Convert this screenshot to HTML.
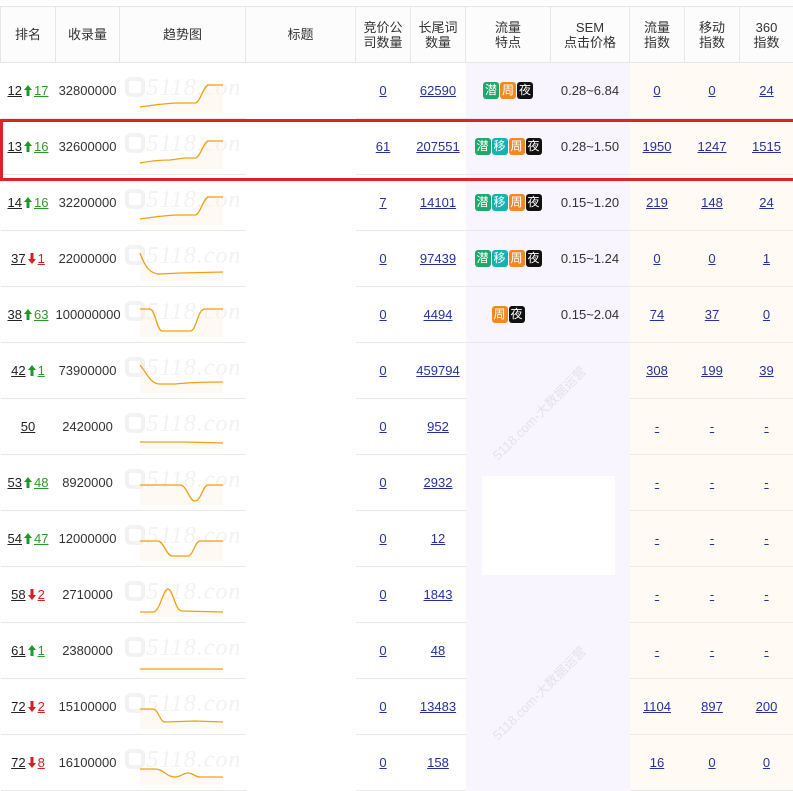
<!DOCTYPE html>
<html><head><meta charset="utf-8"><style>
*{margin:0;padding:0;box-sizing:border-box}
body{width:793px;height:786px;overflow:hidden;background:#fff;font-family:"Liberation Sans","Noto Sans CJK SC",sans-serif;font-size:13px;color:#333;position:relative}
table{position:absolute;left:0;top:6px;border-collapse:collapse;table-layout:fixed;width:793px}
th{height:56px;background:#fcfcfc;font-weight:normal;font-size:13px;color:#333;border:1px solid #e6e6e6;line-height:15px;text-align:center}
td{height:56px;text-align:center;border-bottom:1px solid #e8e8e8;padding:0;position:relative;white-space:nowrap}
td.t{border-bottom:none}
td.p{background:#f8f5fe}
td.o{background:#fffaf3}
td.c{overflow:hidden}
a{color:#22339c;text-decoration:underline}
.r{color:#222;text-decoration:underline}
.g{color:#2a9a2a;text-decoration:underline}
.d{color:#d42020;text-decoration:underline}
.ar{display:inline-block;vertical-align:-1px;margin:0 2px}
.tag{display:inline-block;width:16px;height:17px;border-radius:3px;color:#fff;font-size:12px;line-height:17px;text-align:center;margin:0 0.5px;vertical-align:middle}
.q{background:#1da86c}.y{background:#16b2b0}.z{background:#ef8a22}.n{background:#111}
.wm{position:absolute;left:5px;top:12px;font:italic 24px "Liberation Serif",serif;color:#f2f2f2;letter-spacing:1px}
.wm b{display:inline-block;width:20px;height:20px;border:4px solid #f2f2f2;border-radius:6px;margin-right:2px;vertical-align:-2px}
.ch{position:absolute;left:5px;top:0}
</style></head><body>
<table>
<colgroup><col style="width:55px"><col style="width:64px"><col style="width:126px"><col style="width:110px"><col style="width:55px"><col style="width:55px"><col style="width:85px"><col style="width:79px"><col style="width:55px"><col style="width:55px"><col style="width:54px"></colgroup>
<tr><th>排名</th><th>收录量</th><th>趋势图</th><th>标题</th><th>竞价公<br>司数量</th><th>长尾词<br>数量</th><th>流量<br>特点</th><th>SEM<br>点击价格</th><th>流量<br>指数</th><th>移动<br>指数</th><th>360<br>指数</th></tr>
</table>
<script>
const up='<svg class="ar" width="8" height="11"><path d="M4 0L8 5H5.5V11H2.5V5H0Z" fill="#1a9a2a"/></svg>';
const dn='<svg class="ar" width="8" height="11"><path d="M4 11L8 6H5.5V0H2.5V6H0Z" fill="#d42020"/></svg>';
const T={q:'潜',y:'移',z:'周',n:'夜'};
const data=[
['12','u','17','32800000','M15 44 C30 42 40 40 55 40 L70 40 C75 40 78 24 83 22 L98 22','0','62590','qzn','0.28~6.84','0','0','24'],
['13','u','16','32600000','M15 44 C25 42 35 41 45 41 L60 39 L70 39 C75 39 78 24 83 22 L98 22','61','207551','qyzn','0.28~1.50','1950','1247','1515'],
['14','u','16','32200000','M15 44 C30 42 40 40 55 40 L70 40 C75 40 78 24 83 22 L98 22','7','14101','qyzn','0.15~1.20','219','148','24'],
['37','d','1','22000000','M15 22 C20 36 25 43 35 43 L55 42 L98 41','0','97439','qyzn','0.15~1.24','0','0','1'],
['38','u','63','100000000','M15 22 L25 22 C30 22 32 44 37 44 L65 44 C72 44 72 22 80 22 L98 22','0','4494','zn','0.15~2.04','74','37','0'],
['42','u','1','73900000','M15 22 C22 30 25 41 35 41 L50 41 C70 39 85 39 98 39','0','459794','','','308','199','39'],
['50','','','2420000','M15 43 L60 43 L98 44','0','952','','','-','-','-'],
['53','u','48','8920000','M15 30 L55 30 C62 30 64 46 70 46 C76 46 78 30 83 30 L98 30','0','2932','','','-','-','-'],
['54','u','47','12000000','M15 30 L33 30 C38 30 42 45 47 45 L63 45 C68 45 70 30 75 30 L98 30','0','12','','','-','-','-'],
['58','d','2','2710000','M15 45 L28 45 C35 45 38 22 43 22 C48 22 50 44 57 44 L98 45','0','1843','','','-','-','-'],
['61','u','1','2380000','M15 46 L98 46','0','48','','','-','-','-'],
['72','d','2','15100000','M15 30 L28 30 C33 30 35 43 40 43 L70 42 L98 43','0','13483','','','1104','897','200'],
['72','d','8','16100000','M15 34 L30 34 C38 34 42 42 50 42 C56 42 58 38 63 38 C68 38 70 42 75 42 L98 42','0','158','','','16','0','0']];
let h='';
data.forEach((r,i)=>{
 let rank='<a class="r">'+r[0]+'</a>'+(r[1]=='u'?up+'<a class="g">'+r[2]+'</a>':r[1]=='d'?dn+'<a class="d">'+r[2]+'</a>':'');
 let fill=r[4]+' L98 50 L15 50Z';
 let chart='<div class="wm"><b></b>5118.con</div><svg class="ch" width="121" height="56"><path d="'+fill+'" fill="#fdf0dc" opacity=".35"/><path d="'+r[4]+'" fill="none" stroke="#f0a010" stroke-width="1.3"/></svg>';
 let tags=r[7].split('').filter(x=>x).map(c=>'<span class="tag '+c+'">'+T[c]+'</span>').join('');
 let mid='';
 if(i<5) mid='<td class="p">'+tags+'</td><td class="p">'+r[8]+'</td>';
 else if(i==5) mid='<td class="p t" colspan="2" rowspan="8" style="vertical-align:top"><div style="position:absolute;left:16px;top:133px;width:133px;height:99px;background:#fff"></div><div style="position:absolute;left:10px;top:60px;transform:rotate(-45deg);color:#e6e0ef;font-size:13px">5118.com-大数据运营</div><div style="position:absolute;left:10px;top:340px;transform:rotate(-45deg);color:#e6e0ef;font-size:13px">5118.com-大数据运营</div></td>';
 h+='<tr><td>'+rank+'</td><td>'+r[3]+'</td><td class="c">'+chart+'</td><td class="t"></td><td><a>'+r[5]+'</a></td><td><a>'+r[6]+'</a></td>'+mid+'<td class="o"><a>'+r[9]+'</a></td><td class="o"><a>'+r[10]+'</a></td><td class="o"><a>'+r[11]+'</a></td></tr>';
});
document.querySelector('table').insertAdjacentHTML('beforeend',h);
</script>
<div style="position:absolute;left:0;top:119px;width:796px;height:62px;border:3px solid #e0202a"></div>
</body></html>
